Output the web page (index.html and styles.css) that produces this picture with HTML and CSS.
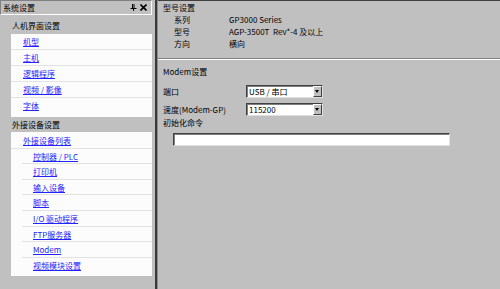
FILE: index.html
```html
<!DOCTYPE html>
<html lang="zh-CN">
<head>
    <meta charset="UTF-8">
    <title>系统设置</title>
    <link rel="stylesheet" href="styles.css">
</head>
<body>
    <div id="app">
        <div id="side">
            <div class="side-title">
                <span>系统设置</span>
                <span class="title-btns">
                    <svg width="7" height="7" viewBox="0 0 7 7"><path d="M2 0h3v4h1.5v1H4v2H3V5H.5V4H2z" fill="#000"/><path d="M4 0v4" stroke="#c0c0c0" stroke-width="1"/></svg>
                    <svg width="7" height="7" viewBox="0 0 7 7"><path d="M.5 .5l6 6M6.5 .5l-6 6" stroke="#000" stroke-width="1.6"/></svg>
                </span>
            </div>
            <div class="group-label">人机界面设置</div>
            <ul class="link-list">
                <li><a href="#">机型</a></li>
                <li><a href="#">主机</a></li>
                <li><a href="#">逻辑程序</a></li>
                <li><a href="#">视频 / 影像</a></li>
                <li><a href="#">字体</a></li>
            </ul>
            <div class="group-label">外接设备设置</div>
            <ul class="link-list dev-list">
                <li><a href="#">外接设备列表</a></li>
                <li class="sub"><a href="#">控制器 / PLC</a></li>
                <li class="sub"><a href="#">打印机</a></li>
                <li class="sub"><a href="#">输入设备</a></li>
                <li class="sub"><a href="#">脚本</a></li>
                <li class="sub"><a href="#">I/O 驱动程序</a></li>
                <li class="sub"><a href="#">FTP服务器</a></li>
                <li class="sub"><a href="#">Modem</a></li>
                <li class="sub"><a href="#">视频模块设置</a></li>
            </ul>
        </div>
        <div id="splitter"></div>
        <div id="main">
            <div class="model-box">
                <div class="box-title">型号设置</div>
                <div class="info-row"><span class="info-key">系列</span><span>GP3000 Series</span></div>
                <div class="info-row"><span class="info-key">型号</span><span>AGP-3500T&nbsp; Rev*-4 及以上</span></div>
                <div class="info-row"><span class="info-key">方向</span><span>横向</span></div>
            </div>
            <div class="modem-box">
                <div class="box-title">Modem设置</div>
                <div class="form-row">
                    <span class="form-key">端口</span>
                    <div class="combo"><span class="combo-val">USB / 串口</span><span class="combo-btn"></span></div>
                </div>
                <div class="form-row">
                    <span class="form-key">速度(Modem-GP)</span>
                    <div class="combo"><span class="combo-val">115200</span><span class="combo-btn"></span></div>
                </div>
                <div class="box-title cmd-label">初始化命令</div>
                <div class="text-field"></div>
            </div>
        </div>
    </div>
</body>
</html>
```

FILE: styles.css
```css
*{
    margin: 0;
    padding: 0;
    box-sizing: border-box;
}
ul{
    list-style: none;
}
body{
    background: #c0c0c0;
    font-family: "Noto Sans CJK SC", "DejaVu Sans", sans-serif;
    font-size: 8px;
    line-height: 12px;
    color: #000;
}
#app{
    display: flex;
    height: 289px;
    overflow: hidden;
}
#side{
    width: 155px;
    padding-right: 3px;
}
.side-title{
    height: 15px;
    display: flex;
    justify-content: space-between;
    align-items: center;
    padding: 0 4px 0 2px;
    border: 1px solid;
    border-color: #808080 #fff #fff #808080;
}
.title-btns{
    display: flex;
    gap: 3px;
}
.title-btns svg{
    display: block;
}
.group-label{
    padding-left: 12px;
    margin-top: 5px;
    margin-bottom: 2px;
}
.link-list + .group-label{
    margin-top: 2px;
    margin-bottom: 1px;
}
.link-list{
    margin-left: 11px;
    background: #fcfcfc;
    padding-bottom: 3px;
}
.link-list li{
    height: 16px;
    line-height: 16px;
    padding-left: 12px;
    border-bottom: 1px solid #e2e2e2;
}
.link-list li:last-child{
    border-bottom: 0;
}
.dev-list{
    padding: 1px 0 3px;
}
.dev-list li{
    height: 15.6px;
    line-height: 15.6px;
}
.link-list li.sub{
    margin-left: 11px;
    padding-left: 11px;
}
.link-list a{
    color: #2222ff;
    text-decoration: underline;
}
#splitter{
    width: 3px;
    background: #3a3a3a;
    border-right: 1px solid #8c8c8c;
}
#main{
    flex: 1;
    display: flex;
    flex-direction: column;
}
.model-box{
    height: 59px;
    padding: 1px 5px 0;
    border-top: 1px solid #404040;
    border-bottom: 1px solid #808080;
}
.info-row{
    display: flex;
    padding-left: 11px;
}
.info-key{
    width: 55px;
}
.modem-box{
    flex: 1;
    padding: 6px 5px 0;
    border-top: 1px solid #fff;
}
.modem-box .box-title{
    margin-bottom: 7px;
}
.form-row{
    display: flex;
    align-items: center;
    height: 13px;
    margin-bottom: 5px;
}
.form-key{
    width: 83px;
}
.combo{
    width: 77px;
    height: 13px;
    display: flex;
    background: #fff;
    border: 1px solid;
    border-color: #404040 #e0e0e0 #e0e0e0 #404040;
    box-shadow: inset 1px 1px 0 #808080;
}
.combo-val{
    flex: 1;
    line-height: 11px;
    padding-left: 2px;
}
.combo-btn{
    width: 9px;
    background: #c0c0c0;
    border: 1px solid;
    border-color: #fff #404040 #404040 #fff;
    position: relative;
}
.combo-btn::after{
    content: "";
    position: absolute;
    left: 1px;
    top: 3px;
    border-left: 2.5px solid transparent;
    border-right: 2.5px solid transparent;
    border-top: 3px solid #000;
}
.modem-box .cmd-label{
    margin-top: -4px;
    margin-bottom: 4px;
}
.text-field{
    width: 277px;
    height: 13px;
    margin-left: 10px;
    background: #fff;
    border: 1px solid;
    border-color: #404040 #e0e0e0 #e0e0e0 #404040;
    box-shadow: inset 1px 1px 0 #808080;
}
```
